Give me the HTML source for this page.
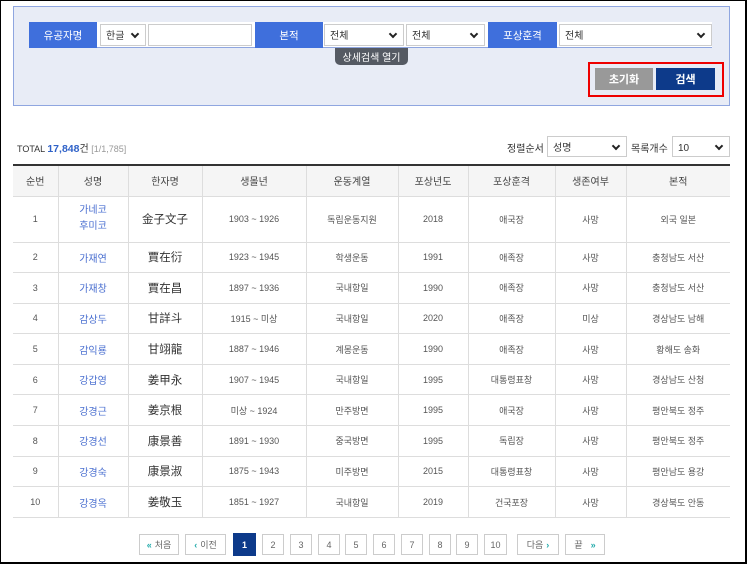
<!DOCTYPE html>
<html><head><meta charset="utf-8"><style>
*{box-sizing:border-box;margin:0;padding:0}
body{width:750px;height:565px;background:#fff;font-family:"Liberation Sans","Noto Sans CJK KR",sans-serif;font-size:10px;color:#444;position:relative;overflow:hidden}
.frame{position:absolute;left:0;top:0;width:747px;height:564px;border:1px solid #000;border-right-width:2px;border-bottom-width:2px}
.box{position:absolute;left:13px;top:6px;width:717px;height:100px;background:#e8ecf6;border:1px solid #8fa6e0}
.a{position:absolute}
.lbl{background:#3f6fdc;color:#fff;font-size:10.5px;display:flex;align-items:center;justify-content:center;height:26px;top:22px}
.row{position:absolute;left:29px;top:22px;width:683px;height:26px;background:#fff;border-bottom:1px solid #8fa6e0}
.sel{background:#fff;border:1px solid #ccc;height:22px;top:24px;font-size:10px;color:#333;padding:6px 5px 0;line-height:12px}
.sel:after{content:"";position:absolute;right:7px;top:6px;width:4px;height:4px;border-right:2px solid #222;border-bottom:2px solid #222;transform:rotate(45deg)}
.btn{top:68px;height:22px;color:#fff;font-size:11px;font-weight:bold;display:flex;align-items:center;justify-content:center}
table{position:absolute;left:13px;top:164px;width:717px;border-collapse:collapse;border-top:2px solid #333}
th{background:#f5f5f5;font-weight:normal;font-size:10px;height:31px;border:1px solid #ddd;color:#444}
td{border:1px solid #ddd;text-align:center;height:30.6px;font-size:9px;color:#555}
td.n{color:#4a6fd0;font-size:10px}
td.h{font-family:"Noto Sans CJK SC",sans-serif;font-size:11.5px;color:#333}
tr:nth-child(2) td{height:46px}
th:first-child,td:first-child{border-left:none}th:last-child,td:last-child{border-right:none}
.pg{position:absolute;top:534px;height:21px;border:1px solid #ccc;font-size:9px;color:#666;display:flex;align-items:center;justify-content:center;background:#fff}
</style></head><body>
<div class="frame"></div>
<div class="box"></div>
<div class="row"></div>
<div class="a lbl" style="left:29px;width:68px">유공자명</div>
<div class="a sel" style="left:100px;width:46px">한글</div>
<div class="a" style="left:148px;top:24px;width:104px;height:22px;background:#fff;border:1px solid #ccc"></div>
<div class="a lbl" style="left:255px;width:68px">본적</div>
<div class="a sel" style="left:324px;width:80px">전체</div>
<div class="a sel" style="left:406px;width:79px">전체</div>
<div class="a lbl" style="left:488px;width:69px">포상훈격</div>
<div class="a sel" style="left:559px;width:153px">전체</div>
<div class="a" style="left:335px;top:48px;width:73px;height:17px;background:#555a63;color:#fff;font-size:10px;border-radius:0 0 5px 5px;display:flex;align-items:center;justify-content:center">상세검색 열기</div>
<div class="a" style="left:588px;top:62px;width:136px;height:35px;border:2px solid #e00"></div>
<div class="a btn" style="left:595px;width:58px;background:#999">초기화</div>
<div class="a btn" style="left:656px;width:59px;background:#0d3a8a">검색</div>
<div class="a" style="left:17px;top:140px;font-size:9px;color:#333">TOTAL <b style="color:#2f62c8;font-size:10.5px">17,848</b><span style="font-size:10px">건</span> <span style="color:#999">[1/1,785]</span></div>
<div class="a" style="left:507px;top:140px;font-size:10px;color:#333">정렬순서</div>
<div class="a sel" style="left:547px;top:136px;width:80px;height:21px">성명</div>
<div class="a" style="left:631px;top:140px;font-size:10px;color:#333">목록개수</div>
<div class="a sel" style="left:672px;top:136px;width:58px;height:21px">10</div>
<table>
<colgroup><col style="width:45px"><col style="width:70px"><col style="width:74px"><col style="width:104px"><col style="width:92px"><col style="width:70px"><col style="width:87px"><col style="width:71px"><col style="width:104px"></colgroup>
<tr><th>순번</th><th>성명</th><th>한자명</th><th>생몰년</th><th>운동계열</th><th>포상년도</th><th>포상훈격</th><th>생존여부</th><th>본적</th></tr>
<tr><td>1</td><td class="n" style="line-height:16px">가네코<br>후미코</td><td class="h">金子文子</td><td>1903 ~ 1926</td><td>독립운동지원</td><td>2018</td><td>애국장</td><td>사망</td><td>외국 일본</td></tr>
<tr><td>2</td><td class="n">가재연</td><td class="h">賈在衍</td><td>1923 ~ 1945</td><td>학생운동</td><td>1991</td><td>애족장</td><td>사망</td><td>충청남도 서산</td></tr>
<tr><td>3</td><td class="n">가재창</td><td class="h">賈在昌</td><td>1897 ~ 1936</td><td>국내항일</td><td>1990</td><td>애족장</td><td>사망</td><td>충청남도 서산</td></tr>
<tr><td>4</td><td class="n">감상두</td><td class="h">甘詳斗</td><td>1915 ~ 미상</td><td>국내항일</td><td>2020</td><td>애족장</td><td>미상</td><td>경상남도 남해</td></tr>
<tr><td>5</td><td class="n">감익룡</td><td class="h">甘翊龍</td><td>1887 ~ 1946</td><td>계몽운동</td><td>1990</td><td>애족장</td><td>사망</td><td>황해도 송화</td></tr>
<tr><td>6</td><td class="n">강갑영</td><td class="h">姜甲永</td><td>1907 ~ 1945</td><td>국내항일</td><td>1995</td><td>대통령표창</td><td>사망</td><td>경상남도 산청</td></tr>
<tr><td>7</td><td class="n">강경근</td><td class="h">姜京根</td><td>미상 ~ 1924</td><td>만주방면</td><td>1995</td><td>애국장</td><td>사망</td><td>평안북도 정주</td></tr>
<tr><td>8</td><td class="n">강경선</td><td class="h">康景善</td><td>1891 ~ 1930</td><td>중국방면</td><td>1995</td><td>독립장</td><td>사망</td><td>평안북도 정주</td></tr>
<tr><td>9</td><td class="n">강경숙</td><td class="h">康景淑</td><td>1875 ~ 1943</td><td>미주방면</td><td>2015</td><td>대통령표창</td><td>사망</td><td>평안남도 용강</td></tr>
<tr><td>10</td><td class="n">강경옥</td><td class="h">姜敬玉</td><td>1851 ~ 1927</td><td>국내항일</td><td>2019</td><td>건국포장</td><td>사망</td><td>경상북도 안동</td></tr>
</table>
<div class="pg" style="left:139px;width:40px"><span style="color:#2aa;font-weight:bold;margin-right:3px">«</span>처음</div>
<div class="pg" style="left:185px;width:41px"><span style="color:#2aa;font-weight:bold;margin-right:3px">‹</span>이전</div>
<div class="pg" style="left:233px;width:23px;background:#0d3a8a;border-color:#0d3a8a;color:#fff;font-weight:bold;top:533px;height:23px">1</div>
<div class="pg" style="left:262px;width:22px">2</div>
<div class="pg" style="left:290px;width:22px">3</div>
<div class="pg" style="left:318px;width:22px">4</div>
<div class="pg" style="left:345px;width:22px">5</div>
<div class="pg" style="left:373px;width:22px">6</div>
<div class="pg" style="left:401px;width:22px">7</div>
<div class="pg" style="left:429px;width:22px">8</div>
<div class="pg" style="left:456px;width:22px">9</div>
<div class="pg" style="left:484px;width:23px">10</div>
<div class="pg" style="left:517px;width:42px">다음<span style="color:#2aa;font-weight:bold;margin-left:3px">›</span></div>
<div class="pg" style="left:565px;width:40px">끝<span style="color:#2aa;font-weight:bold;margin-left:8px">»</span></div>
</body></html>
